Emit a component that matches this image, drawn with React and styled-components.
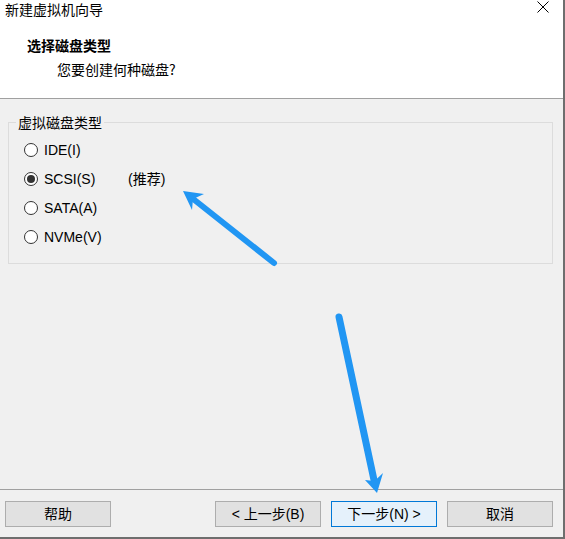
import React, { useState } from 'react'
import styled, { createGlobalStyle } from 'styled-components'

const GlobalStyle = createGlobalStyle`
  html, body {
    margin: 0;
    padding: 0;
    background: #ffffff;
  }
  * {
    box-sizing: border-box;
  }
`

const Window = styled.div`
  position: relative;
  width: 565px;
  height: 539px;
  display: flex;
  flex-direction: column;
  border-right: 2px solid #6e6e6e;
  border-bottom: 2px solid #6e6e6e;
  font-family: "Liberation Sans", "Noto Sans CJK SC", sans-serif;
  font-size: 14px;
  color: #000;
  overflow: hidden;
`

const Header = styled.div`
  height: 99px;
  background: #ffffff;
  border-bottom: 1px solid #a0a0a0;
`

const TitleBar = styled.div`
  height: 18px;
  display: flex;
  align-items: flex-start;
  justify-content: space-between;
  padding: 2px 14px 0 5px;
`

const Title = styled.span`
  font-family: "Noto Sans CJK SC", sans-serif;
  font-size: 14px;
  line-height: 15px;
`

const Close = styled.svg`
  width: 12px;
  height: 12px;
  margin-top: -1px;
`

const Heading = styled.div`
  margin: 18px 0 0 27px;
  font-family: "Noto Sans CJK SC", sans-serif;
  font-weight: bold;
  font-size: 14px;
  line-height: 18px;
`

const SubHeading = styled.div`
  margin: 6px 0 0 57px;
  font-family: "Noto Sans CJK SC", sans-serif;
  font-size: 14px;
  line-height: 18px;
`

const Body = styled.div`
  flex: 1;
  background: #f0f0f0;
  padding: 23px 10px 0 8px;
`

const GroupBox = styled.div`
  position: relative;
  width: 545px;
  height: 142px;
  border: 1px solid #dcdcdc;
  padding: 12px 0 0 15px;
`

const Legend = styled.span`
  position: absolute;
  top: -9px;
  left: 7px;
  padding: 0 2px;
  background: #f0f0f0;
  font-family: "Noto Sans CJK SC", sans-serif;
  line-height: 17px;
`

const Row = styled.label`
  height: 29px;
  display: flex;
  align-items: center;
  cursor: default;
`

const Circle = styled.span`
  width: 14px;
  height: 14px;
  border-radius: 50%;
  border: 1px solid #333333;
  background: #ffffff;
  display: flex;
  align-items: center;
  justify-content: center;
  margin-right: 6px;

  &::after {
    content: '';
    width: 8px;
    height: 8px;
    border-radius: 50%;
    background: ${p => (p.$checked ? '#333333' : 'transparent')};
  }
`

const RowText = styled.span`
  width: 84px;
  line-height: 16px;
`

const Hint = styled.span`
  line-height: 16px;
`

const Footer = styled.div`
  height: 48px;
  background: #f0f0f0;
  border-top: 1px solid #a0a0a0;
  display: flex;
  align-items: flex-start;
  padding: 11px 10px 0 5px;
`

const Spacer = styled.div`
  flex: 1;
`

const Button = styled.button`
  width: 106px;
  height: 26px;
  margin-left: ${p => (p.$gap ? '10px' : '0')};
  background: ${p => (p.$primary ? '#e5f1fb' : '#e1e1e1')};
  border: 1px solid ${p => (p.$primary ? '#0078d7' : '#adadad')};
  font-family: "Liberation Sans", "Noto Sans CJK SC", sans-serif;
  font-size: 14px;
  color: #000;
  padding: 0;
  line-height: 24px;
`

const Arrows = styled.svg`
  position: absolute;
  top: 0;
  left: 0;
  width: 565px;
  height: 539px;
  pointer-events: none;
`

const types = [
  { id: 'ide', label: 'IDE(I)' },
  { id: 'scsi', label: 'SCSI(S)', hint: '(推荐)' },
  { id: 'sata', label: 'SATA(A)' },
  { id: 'nvme', label: 'NVMe(V)' },
]

export default function App() {
  const [selected, setSelected] = useState('scsi')

  return (
    <>
      <GlobalStyle />
      <Window>
        <Header>
          <TitleBar>
            <Title>新建虚拟机向导</Title>
            <Close viewBox="0 0 12 12">
              <path d="M0.5 0.5 L11.5 11.5 M11.5 0.5 L0.5 11.5" stroke="#000" strokeWidth="1" fill="none" />
            </Close>
          </TitleBar>
          <Heading>选择磁盘类型</Heading>
          <SubHeading>您要创建何种磁盘?</SubHeading>
        </Header>

        <Body>
          <GroupBox>
            <Legend>虚拟磁盘类型</Legend>
            {types.map(t => (
              <Row key={t.id} onClick={() => setSelected(t.id)}>
                <Circle $checked={selected === t.id} />
                <RowText>{t.label}</RowText>
                {t.hint && <Hint>{t.hint}</Hint>}
              </Row>
            ))}
          </GroupBox>
        </Body>

        <Footer>
          <Button>帮助</Button>
          <Spacer />
          <Button>&lt; 上一步(B)</Button>
          <Button $gap $primary>下一步(N) &gt;</Button>
          <Button $gap>取消</Button>
        </Footer>

        <Arrows viewBox="0 0 565 539">
          <line x1="274" y1="263" x2="192" y2="198" stroke="#2196f3" strokeWidth="6" strokeLinecap="round" />
          <polygon points="183,191 204,194 193,199 192,210" fill="#2196f3" />
          <line x1="339" y1="317" x2="374" y2="480" stroke="#2196f3" strokeWidth="7" strokeLinecap="round" />
          <polygon points="377,493 365,480 374.5,481 383,473" fill="#2196f3" />
        </Arrows>
      </Window>
    </>
  )
}
